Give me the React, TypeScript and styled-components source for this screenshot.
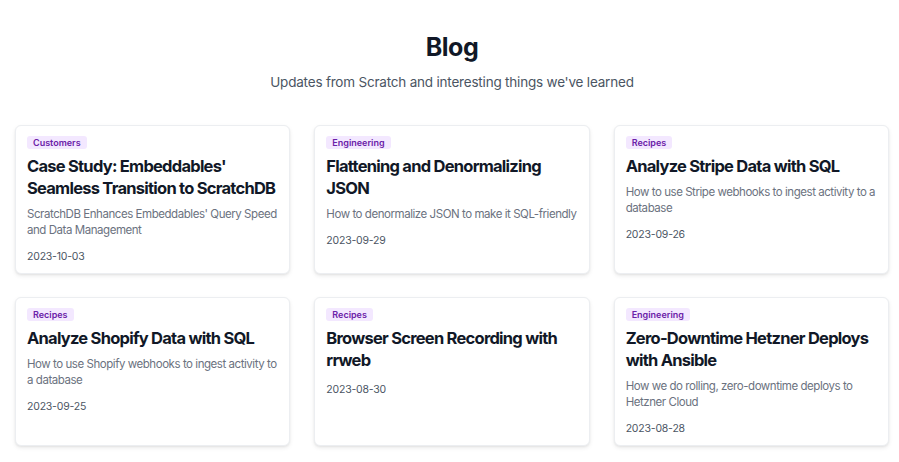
import React from 'react';
import styled, { createGlobalStyle } from 'styled-components';

type Post = {
  category: string;
  title: string;
  summary: string;
  date: string;
};

const posts: Post[] = [
  {
    category: 'Customers',
    title: "Case Study: Embeddables' Seamless Transition to ScratchDB",
    summary: "ScratchDB Enhances Embeddables' Query Speed and Data Management",
    date: '2023-10-03',
  },
  {
    category: 'Engineering',
    title: 'Flattening and Denormalizing JSON',
    summary: 'How to denormalize JSON to make it SQL-friendly',
    date: '2023-09-29',
  },
  {
    category: 'Recipes',
    title: 'Analyze Stripe Data with SQL',
    summary: 'How to use Stripe webhooks to ingest activity to a database',
    date: '2023-09-26',
  },
  {
    category: 'Recipes',
    title: 'Analyze Shopify Data with SQL',
    summary: 'How to use Shopify webhooks to ingest activity to a database',
    date: '2023-09-25',
  },
  {
    category: 'Recipes',
    title: 'Browser Screen Recording with rrweb',
    summary: '',
    date: '2023-08-30',
  },
  {
    category: 'Engineering',
    title: 'Zero-Downtime Hetzner Deploys with Ansible',
    summary: 'How we do rolling, zero-downtime deploys to Hetzner Cloud',
    date: '2023-08-28',
  },
];

const GlobalStyle = createGlobalStyle`
  body {
    margin: 0;
    background: #fff;
    font-family: Inter, "Noto Sans", sans-serif;
    -webkit-font-smoothing: antialiased;
  }
`;

const App = () => {
  return <Page>
    <GlobalStyle />
    <Header>
      <Title>Blog</Title>
      <Subtitle>Updates from Scratch and interesting things we've learned</Subtitle>
    </Header>
    <Grid>
      {posts.map(post => {
        return <Card key={post.title}>
          <Badge>{post.category}</Badge>
          <PostTitle>{post.title}</PostTitle>
          {post.summary && <Summary>{post.summary}</Summary>}
          <PostDate>{post.date}</PostDate>
        </Card>;
      })}
    </Grid>
  </Page>;
};

const Page = styled.div`
  padding: 30px 10px 20px 15px;
`;

const Header = styled.header`
  text-align: center;
  margin-bottom: 33px;
`;

const Title = styled.h1`
  margin: 0;
  font-size: 25px;
  line-height: 34px;
  font-weight: 700;
  color: #111827;
  letter-spacing: -0.5px;
`;

const Subtitle = styled.p`
  margin: 8px 0 0;
  font-size: 13.5px;
  line-height: 20px;
  color: #4b5563;
  letter-spacing: -0.2px;
`;

const Grid = styled.div`
  display: grid;
  grid-template-columns: repeat(3, 1fr);
  column-gap: 24px;
  row-gap: 23px;
`;

const Card = styled.article`
  display: flex;
  flex-direction: column;
  align-items: flex-start;
  padding: 10px 10px 8px 11px;
  border: 1px solid #eceef1;
  border-radius: 6px;
  background: #fff;
  box-shadow: 0 2px 4px rgba(0, 0, 0, 0.08), 0 1px 2px rgba(0, 0, 0, 0.05);
`;

const Badge = styled.span`
  display: inline-block;
  padding: 0 6px;
  font-size: 9px;
  line-height: 13px;
  font-weight: 600;
  color: #6b21a8;
  background: #f3e8ff;
  border-radius: 3px;
`;

const PostTitle = styled.h2`
  margin: 6px 0 0;
  font-size: 16.5px;
  line-height: 22px;
  font-weight: 700;
  color: #111827;
  letter-spacing: -0.75px;
`;

const Summary = styled.p`
  margin: 7px 0 0;
  font-size: 11.5px;
  line-height: 16px;
  color: #6b7280;
  letter-spacing: -0.45px;
`;

const PostDate = styled.time`
  margin-top: 11px;
  font-size: 10.5px;
  line-height: 16px;
  color: #4b5563;
  letter-spacing: -0.2px;
`;

export default App;
